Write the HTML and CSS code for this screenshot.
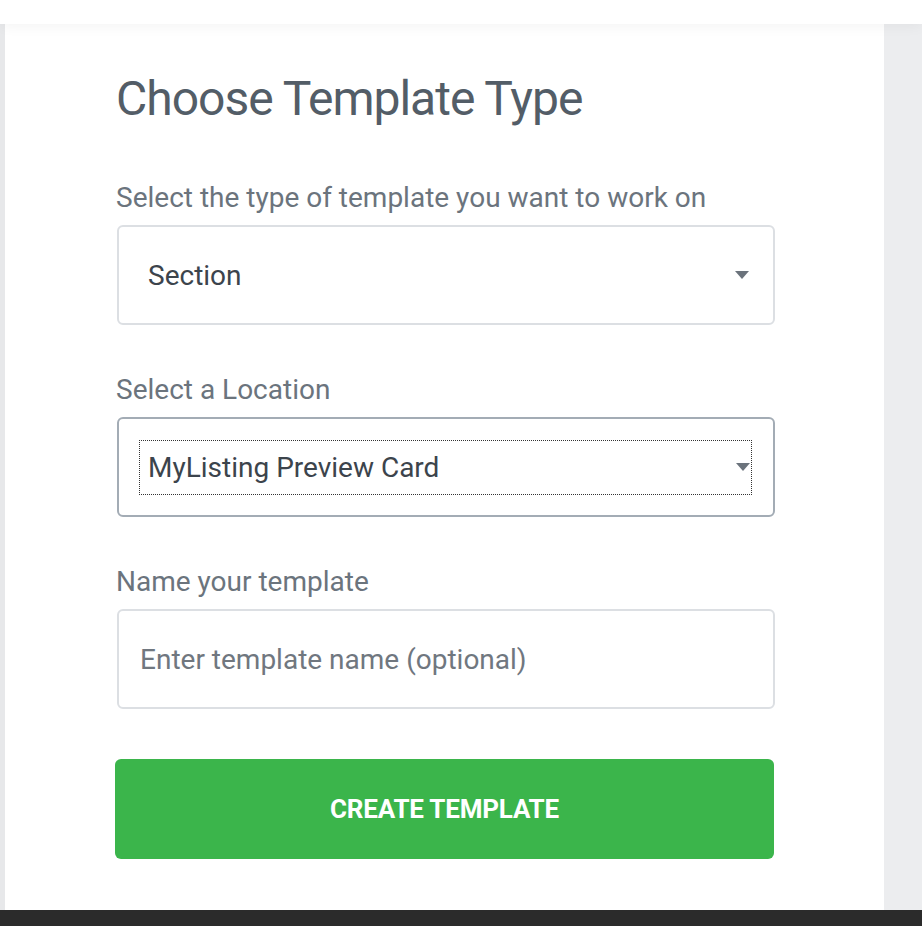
FILE: index.html
```html
<!DOCTYPE html>
<html>
<head>
<meta charset="utf-8">
<link rel="stylesheet" href="styles.css">
</head>
<body>
<div class="topbar"></div>
<div class="frame">
  <div class="left-strip"></div>
  <main class="card">
    <h1 class="title">Choose Template Type</h1>
    <div class="field">
      <div class="label">Select the type of template you want to work on</div>
      <div class="box select">
        <span class="value">Section</span>
        <svg class="arrow" width="14" height="8" viewBox="0 0 14 8"><path d="M0 0H14L7 8Z" fill="#6b737c"/></svg>
      </div>
    </div>
    <div class="field">
      <div class="label">Select a Location</div>
      <div class="box select focused">
        <div class="focus-ring">
          <span class="value">MyListing Preview Card</span>
          <svg class="arrow" width="14" height="8" viewBox="0 0 14 8"><path d="M0 0H14L7 8Z" fill="#6b737c"/></svg>
        </div>
      </div>
    </div>
    <div class="field">
      <div class="label">Name your template</div>
      <div class="box input">
        <span class="placeholder">Enter template name (optional)</span>
      </div>
    </div>
    <button class="create">CREATE TEMPLATE</button>
  </main>
  <div class="right-panel"></div>
</div>
<div class="bottombar"></div>
</body>
</html>
```

FILE: styles.css
```css
html, body {
  margin: 0;
  padding: 0;
  background: #ffffff;
}
body {
  width: 922px;
  height: 926px;
  overflow: hidden;
  font-family: Roboto, "Liberation Sans", sans-serif;
  display: flex;
  flex-direction: column;
}
.topbar {
  height: 24px;
  background: #ffffff;
  flex: none;
  position: relative;
  z-index: 2;
  box-shadow: 0 2px 14px rgba(0,0,0,0.05);
}
.frame {
  flex: 1;
  display: flex;
  min-height: 0;
}
.left-strip {
  width: 5px;
  background: #e7e8ea;
  flex: none;
}
.right-panel {
  width: 38px;
  background: #ecedef;
  flex: none;
}
.card {
  flex: 1;
  background: #ffffff;
  padding: 47px 0 0 111px;
}
.title {
  margin: 0;
  font-size: 48px;
  line-height: 56px;
  font-weight: 400;
  letter-spacing: -1px;
  color: #535d67;
}
.field {
  width: 659px;
  margin-top: 55px;
}
.field + .field {
  margin-top: 49px;
}
.label {
  font-size: 28px;
  line-height: 32px;
  color: #6b747d;
  margin-bottom: 11px;
  letter-spacing: 0;
}
.box {
  box-sizing: border-box;
  height: 100px;
  border: 2px solid #dcdfe3;
  border-radius: 6px;
  margin-left: 1px;
  display: flex;
  align-items: center;
}
.select {
  padding: 0 24px 0 29px;
  justify-content: space-between;
}
.select.focused {
  border-color: #a3acb5;
  padding: 0 21px 0 20px;
}
.focus-ring {
  flex: 1;
  height: 55px;
  box-sizing: border-box;
  border: 1px dotted #333;
  display: flex;
  align-items: center;
  justify-content: space-between;
  padding: 0 0 0 8px;
}
.focus-ring .arrow {
  margin-right: 1px;
}
.value {
  font-size: 28px;
  color: #3c444c;
}
.arrow {
  flex: none;
}
.input {
  padding: 0 21px;
}
.placeholder {
  font-size: 28px;
  color: #70777f;
}
.create {
  display: block;
  margin-top: 50px;
  width: 659px;
  height: 100px;
  border: none;
  border-radius: 6px;
  background: #3bb54b;
  color: #ffffff;
  font-family: Roboto, "Liberation Sans", sans-serif;
  font-size: 26px;
  font-weight: 700;
  letter-spacing: -0.2px;
  padding: 0;
  margin-left: -1px;
}
.bottombar {
  height: 16px;
  background: #2b2b2b;
  flex: none;
}
```
